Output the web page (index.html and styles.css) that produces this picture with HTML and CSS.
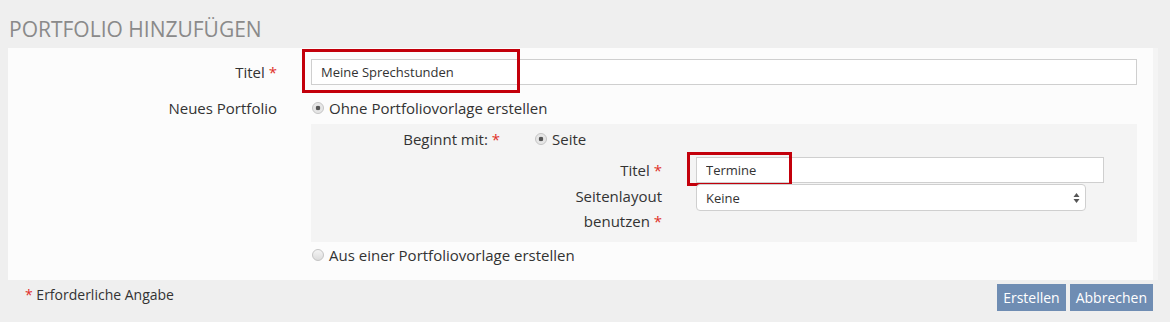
FILE: index.html
```html
<!DOCTYPE html>
<html>

<head>
  <meta charset="UTF-8">
  <title>Portfolio hinzufügen</title>
  <link rel="stylesheet" href="styles.css">
</head>

<body>
  <main class="page">
    <h1 class="page-title">Portfolio hinzufügen</h1>

    <form class="panel">
      <div class="row">
        <label class="row-label" for="title">Titel <span class="req">*</span></label>
        <div class="field marked">
          <input type="text" id="title" class="text-input" value="Meine Sprechstunden" />
          <span class="mark mark-title"></span>
        </div>
      </div>

      <div class="row row-options">
        <div class="row-label">Neues Portfolio</div>
        <div class="options">
          <label class="radio-line"><input type="radio" name="mode" checked /> Ohne Portfoliovorlage erstellen</label>

          <div class="sub-box">
            <div class="sub-row">
              <div class="sub-label">Beginnt mit: <span class="req">*</span></div>
              <div class="sub-content">
                <label class="radio-line"><input type="radio" name="start" checked /> Seite</label>

                <div class="page-grid">
                  <label class="page-label" for="page-title">Titel <span class="req">*</span></label>
                  <div class="field marked">
                    <input type="text" id="page-title" class="text-input" value="Termine" />
                    <span class="mark mark-page"></span>
                  </div>

                  <label class="page-label layout-label" for="layout">Seitenlayout benutzen <span class="req">*</span></label>
                  <div class="select-wrap">
                    <select id="layout" class="select">
                      <option>Keine</option>
                    </select>
                    <svg class="select-arrow" width="7" height="12" viewBox="0 0 7 12">
                      <path d="M3.5 1 L6.5 5 L0.5 5 Z" fill="#555" />
                      <path d="M3.5 11 L6.5 7 L0.5 7 Z" fill="#555" />
                    </svg>
                  </div>
                </div>
              </div>
            </div>
          </div>

          <label class="radio-line last"><input type="radio" name="mode" /> Aus einer Portfoliovorlage erstellen</label>
        </div>
      </div>
    </form>

    <div class="footer">
      <div class="hint"><span class="req">*</span> Erforderliche Angabe</div>
      <div class="buttons">
        <button type="button" class="btn">Erstellen</button>
        <button type="button" class="btn">Abbrechen</button>
      </div>
    </div>
  </main>
</body>

</html>
```

FILE: styles.css
```css
body {
  margin: 0;
  padding: 0;
  background-color: #efefef;
  font-family: "Open Sans", "Liberation Sans", sans-serif;
  font-size: 15px;
  color: #333;
}

.page {
  width: 1145px;
  padding: 0 8px;
}

.page-title {
  margin: 0;
  padding: 15px 0 0 1px;
  height: 48px;
  box-sizing: border-box;
  font-size: 21px;
  font-weight: normal;
  line-height: 28px;
  text-transform: uppercase;
  color: #8a8a8a;
}

.panel {
  height: 232px;
  box-sizing: border-box;
  padding: 11px 16px 0 0;
  background-color: #fcfcfc;
  box-shadow: 5px 0 0 #f4f4f4;
}

.row {
  display: grid;
  grid-template-columns: 269px 1fr;
  column-gap: 34px;
}

.row-label {
  text-align: right;
  line-height: 26px;
}

.row-options {
  margin-top: 12px;
}

.row-options .row-label {
  line-height: 22px;
}

.req {
  color: #e0302a;
}

.field {
  position: relative;
}

.text-input {
  display: block;
  width: 100%;
  height: 26px;
  box-sizing: border-box;
  margin: 0;
  padding: 0 9px;
  border: 1px solid #cfcfcf;
  border-radius: 0;
  background: #fff;
  font-family: inherit;
  font-size: 13px;
  color: #333;
}

/* red annotation frames drawn over the inputs */
.mark {
  position: absolute;
  border: 3px solid #c3000b;
  box-sizing: border-box;
  pointer-events: none;
}

.mark-title {
  left: -9px;
  top: -10px;
  width: 218px;
  height: 44px;
}

.mark-page {
  left: -9px;
  top: -5px;
  width: 105px;
  height: 34px;
}

.radio-line {
  display: flex;
  align-items: center;
  gap: 5px;
  line-height: 22px;
}

.radio-line.last {
  margin-top: 2px;
}

.radio-line input {
  appearance: none;
  -webkit-appearance: none;
  width: 12px;
  height: 12px;
  margin: 0 0 0 1px;
  border: 1px solid #c4c4c4;
  border-radius: 50%;
  box-sizing: border-box;
  background: linear-gradient(#f4f4f4, #dcdcdc);
}

.radio-line input:checked {
  background: radial-gradient(circle, #555 0, #555 2px, #e4e4e4 2.6px, #eaeaea 100%);
}

.sub-box {
  margin-top: 5px;
  height: 118px;
  box-sizing: border-box;
  padding: 4px 33px 0 0;
  background-color: #f4f4f4;
}

.sub-row {
  display: grid;
  grid-template-columns: 189px 1fr;
  column-gap: 35px;
}

.sub-label {
  text-align: right;
  line-height: 22px;
}

.sub-content .radio-line input {
  margin-left: 0;
}

.page-grid {
  display: grid;
  grid-template-columns: 127px 1fr;
  column-gap: 34px;
  row-gap: 1px;
  margin-top: 7px;
}

.page-label {
  text-align: right;
  line-height: 26px;
}

.layout-label {
  line-height: 25px;
}

.select-wrap {
  position: relative;
  width: 390px;
  align-self: start;
}

.select {
  appearance: none;
  -webkit-appearance: none;
  display: block;
  width: 100%;
  height: 27px;
  margin: 0;
  padding: 0 9px;
  border: 1px solid #cfcfcf;
  border-radius: 4px;
  background: #fff;
  font-family: inherit;
  font-size: 13px;
  color: #333;
}

.select-arrow {
  position: absolute;
  right: 6px;
  top: 8px;
}

.footer {
  display: flex;
  justify-content: space-between;
  align-items: flex-start;
  padding: 4px 0 0 17px;
}

.hint {
  font-size: 14px;
  line-height: 22px;
}

.buttons {
  display: flex;
  gap: 4px;
}

.btn {
  height: 27px;
  padding: 0 6px;
  border: none;
  background-color: #6f8db3;
  color: #fff;
  font-family: inherit;
  font-size: 14px;
  cursor: pointer;
}
```
